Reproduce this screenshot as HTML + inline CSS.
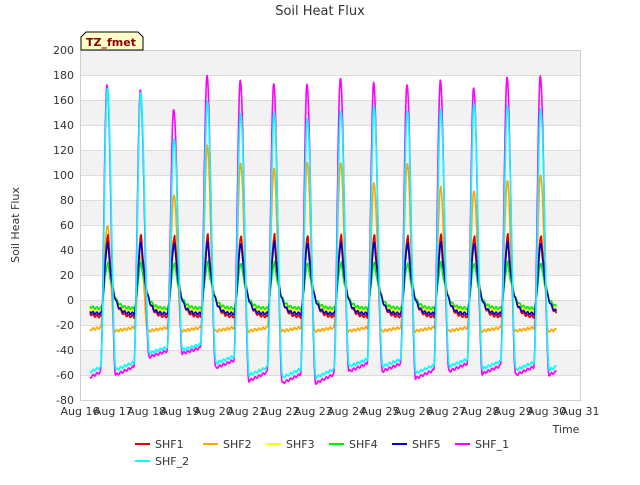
<!DOCTYPE html>
<html><head><meta charset="utf-8"><style>
body{margin:0;background:#fff;font-family:"Liberation Sans","DejaVu Sans",sans-serif;}
</style></head><body>
<svg id="s" width="640" height="480" xmlns="http://www.w3.org/2000/svg" font-family="DejaVu Sans, Liberation Sans, sans-serif">
<rect width="640" height="480" fill="#fff"/>
<g id="bands"></g>
<g id="grid" stroke="#dcdcdc" stroke-width="1"></g>
<rect x="80.5" y="50.5" width="500" height="350" fill="none" stroke="#d0d0d0"/>
<g id="data" fill="none" stroke-width="1.6" stroke-linejoin="round"></g>
<g id="ylab" font-size="11" fill="#333" text-anchor="end"></g>
<g id="xlab" font-size="11" fill="#333" text-anchor="middle"></g>
<text x="320" y="15" font-size="13" fill="#333" text-anchor="middle">Soil Heat Flux</text>
<text x="19" y="225" font-size="11" fill="#333" text-anchor="middle" transform="rotate(-90 19 225)">Soil Heat Flux</text>
<text x="566" y="433" font-size="11" fill="#333" text-anchor="middle">Time</text>
<path d="M81,50 L81,37 L86,32 L138,32 L143,37 L143,50 Z" fill="#ffffcc" stroke="#000" stroke-width="1"/>
<text x="111" y="46" font-size="11" font-weight="bold" fill="#8b0000" text-anchor="middle">TZ_fmet</text>
<g font-size="11" fill="#333">
<line x1="135" y1="444" x2="150" y2="444" stroke="#e00000" stroke-width="2"/><text x="155" y="448">SHF1</text>
<line x1="203" y1="444" x2="218" y2="444" stroke="#ffa500" stroke-width="2"/><text x="223" y="448">SHF2</text>
<line x1="266" y1="444" x2="281" y2="444" stroke="#ffff00" stroke-width="2"/><text x="286" y="448">SHF3</text>
<line x1="329" y1="444" x2="344" y2="444" stroke="#00ee00" stroke-width="2"/><text x="349" y="448">SHF4</text>
<line x1="392" y1="444" x2="407" y2="444" stroke="#0000dd" stroke-width="2"/><text x="412" y="448">SHF5</text>
<line x1="455" y1="444" x2="470" y2="444" stroke="#ff00ff" stroke-width="2"/><text x="475" y="448">SHF_1</text>
<line x1="135" y1="461" x2="150" y2="461" stroke="#00ffff" stroke-width="2"/><text x="155" y="465">SHF_2</text>
</g>
</svg>
<script>
var NS="http://www.w3.org/2000/svg";
function el(t,a,p){var e=document.createElementNS(NS,t);for(var k in a)e.setAttribute(k,a[k]);document.getElementById(p).appendChild(e);return e;}
function Y(v){return 300-v*1.25;}
[[180,200],[140,160],[100,120],[60,80],[20,40],[-20,0],[-60,-40]].forEach(function(b){el('rect',{x:80,y:Y(b[1]),width:500,height:25,fill:'#f2f2f2'},'bands');});
for(var v=-80;v<=200;v+=20){el('line',{x1:80,x2:580,y1:Y(v)+0.5,y2:Y(v)+0.5},'grid');var t=el('text',{x:74,y:Y(v)+4},'ylab');t.textContent=v;}
for(var d=0;d<=15;d++){var t=el('text',{x:80+d*33.333,y:415},'xlab');t.textContent='Aug '+(16+d);}
var P1=[173,167,153,179,176,173,172,178,173,173,175,170,178,179];
var P2=[170,165,130,158,150,150,145,152,155,152,152,158,155,153];
var T1=[-68,-63,-48,-45,-57,-68,-70,-70,-60,-60,-66,-60,-62,-63];
var PO=[60,35,85,123,110,105,110,110,93,110,90,88,95,100];
function cl(i){return Math.max(0,Math.min(13,i));}
// pt: peak phase, r: rise length, fl: fall length (cosine) or tau if exp
function series(peaks,troughs,color,pt,r,fl,exp){
 var pts=[];
 for(var t=16.3;t<=30.3;t+=0.01){
  // nearest peak index: peaks at day+pt
  var pd=Math.floor(t-pt+r); // peak day whose window [pd+pt-r, pd+1+pt-r)
  var g=t-(pd+pt);
  var pk=peaks[cl(pd-16)];
  var trA=troughs[cl(pd-16)], trB=troughs[cl(pd-16+1)];
  var v,s;
  if(g<0){ s=(1-Math.cos(Math.PI*(g+r)/r))/2; var base=trA*0.85; v=base+(pk-base)*s; }
  else{
   var L=1-r; var nb=trB*(1-0.15*Math.min(1,g/L));
   if(exp) s=Math.exp(-g/fl); else s=g<fl?(1+Math.cos(Math.PI*g/fl))/2:0;
   v=nb+(pk-nb)*s;
  }
  v+=Math.sin(t*53)*1.0;
  pts.push((80+(t-16)*33.333).toFixed(1)+','+Y(v).toFixed(1));
 }
 el('polyline',{points:pts.join(' '),stroke:color},'data');
}
function sc(a,k){return a.map(function(x){return x*k;});}
function cst(v){var a=[];for(var i=0;i<14;i++)a.push(v);return a;}
series(PO,cst(-26),'#ffa500',0.82,0.2,0.22,false);
series(cst(52),cst(-16),'#e00000',0.84,0.22,0.16,true);
series(cst(42),cst(-11),'#ffff00',0.84,0.22,0.16,true);
series(cst(30),cst(-8),'#00ee00',0.84,0.22,0.16,true);
series(cst(46),cst(-13),'#0000dd',0.84,0.22,0.15,true);
series(P1,T1,'#ff00ff',0.81,0.2,0.26,false);
series(P2,sc(T1,0.93),'#00ffff',0.82,0.2,0.26,false);
</script>
</body></html>
